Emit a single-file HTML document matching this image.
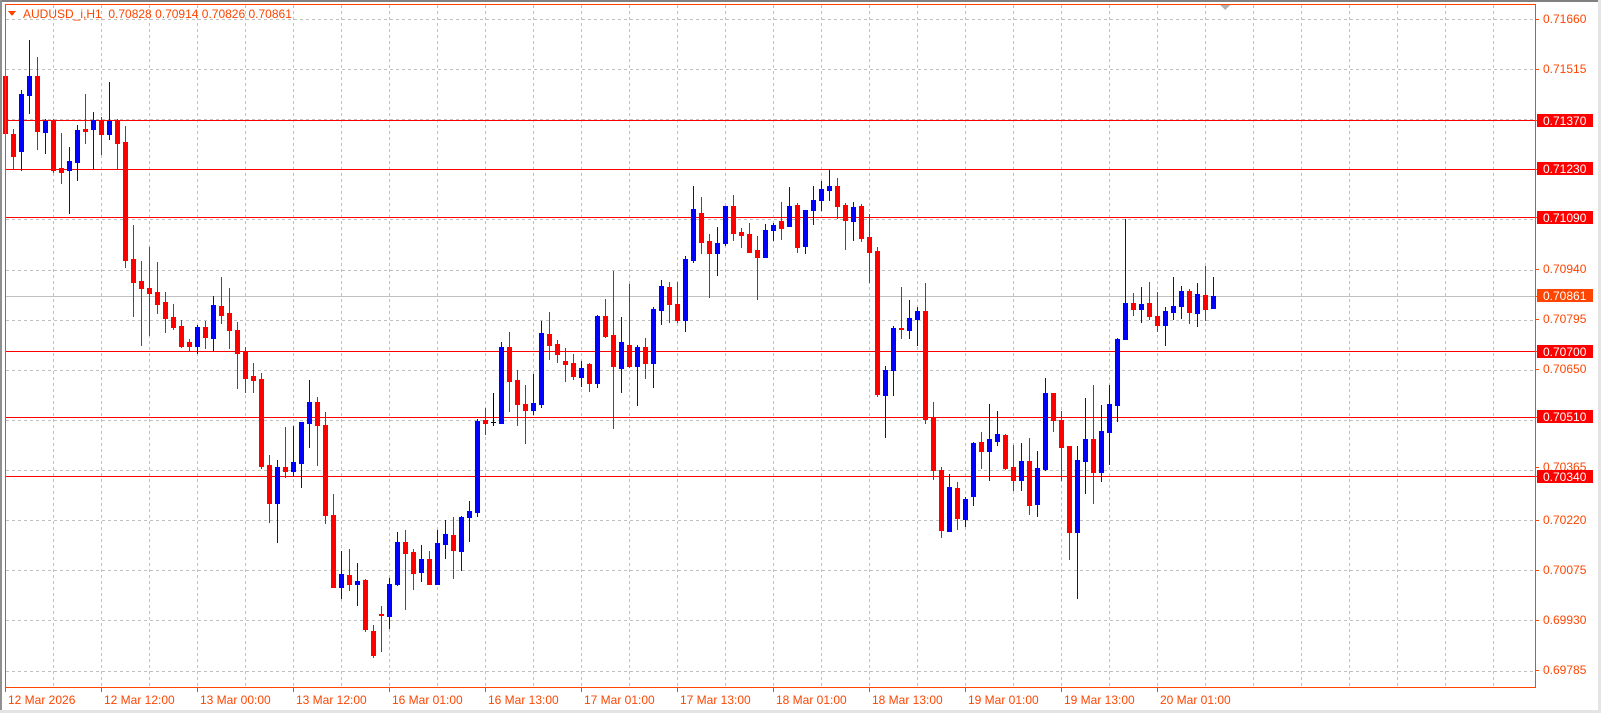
<!DOCTYPE html>
<html><head><meta charset="utf-8"><style>
html,body{margin:0;padding:0;background:#fff;width:1601px;height:713px;overflow:hidden}
svg{display:block}
text{font-family:"Liberation Sans",sans-serif;font-size:12px}
</style></head><body>
<svg id="s" width="1601" height="713" viewBox="0 0 1601 713" xmlns="http://www.w3.org/2000/svg" shape-rendering="crispEdges">
<rect x="0" y="0" width="1601" height="713" fill="#fff"/>
<rect x="0" y="0" width="1601" height="2" fill="#808080"/>
<rect x="0" y="0" width="2" height="713" fill="#909090"/>
<rect x="1598" y="0" width="3" height="713" fill="#e4e4e4"/>
<rect x="0" y="710" width="1601" height="3" fill="#e4e4e4"/>
<g id="grid" stroke="#c0c0c0" stroke-width="1" stroke-dasharray="3,3"></g>
<g id="lines"></g>
<g id="candles"></g>
<rect x="5.5" y="4.5" width="1530" height="683" fill="none" stroke="#ff4500" stroke-width="1"/>
<polygon points="1220,5 1230,5 1225,10" fill="#b0b0b0"/>
<polygon points="8,11 16,11 12,16" fill="#ff4500"/>
<text x="23" y="18" fill="#ff4500" font-size="12" xml:space="preserve" style="white-space:pre">AUDUSD_i,H1  0.70828 0.70914 0.70826 0.70861</text>
<g id="ticks" stroke="#ff4500"></g>
<g fill="#ff4500" font-size="12">
<text x="1543" y="23">0.71660</text>
<text x="1543" y="73">0.71515</text>
<text x="1543" y="273">0.70940</text>
<text x="1543" y="323">0.70795</text>
<text x="1543" y="373">0.70650</text>
<text x="1543" y="471">0.70365</text>
<text x="1543" y="524">0.70220</text>
<text x="1543" y="574">0.70075</text>
<text x="1543" y="624">0.69930</text>
<text x="1543" y="674">0.69785</text>
</g>
<g>
<rect x="1537" y="114" width="56" height="13" fill="#ff0000"/><text x="1543" y="125" fill="#fff">0.71370</text>
<rect x="1537" y="162" width="56" height="13" fill="#ff0000"/><text x="1543" y="173" fill="#fff">0.71230</text>
<rect x="1537" y="211" width="56" height="13" fill="#ff0000"/><text x="1543" y="222" fill="#fff">0.71090</text>
<rect x="1537" y="289" width="56" height="13" fill="#ff4500"/><text x="1543" y="300" fill="#fff">0.70861</text>
<rect x="1537" y="345" width="56" height="13" fill="#ff0000"/><text x="1543" y="356" fill="#fff">0.70700</text>
<rect x="1537" y="410" width="56" height="13" fill="#ff0000"/><text x="1543" y="421" fill="#fff">0.70510</text>
<rect x="1537" y="470" width="56" height="13" fill="#ff0000"/><text x="1543" y="481" fill="#fff">0.70340</text>
</g>
<g fill="#ff4500" font-size="12">
<text x="8" y="704">12 Mar 2026</text>
<text x="104" y="704">12 Mar 12:00</text>
<text x="200" y="704">13 Mar 00:00</text>
<text x="296" y="704">13 Mar 12:00</text>
<text x="392" y="704">16 Mar 01:00</text>
<text x="488" y="704">16 Mar 13:00</text>
<text x="584" y="704">17 Mar 01:00</text>
<text x="680" y="704">17 Mar 13:00</text>
<text x="776" y="704">18 Mar 01:00</text>
<text x="872" y="704">18 Mar 13:00</text>
<text x="968" y="704">19 Mar 01:00</text>
<text x="1064" y="704">19 Mar 13:00</text>
<text x="1160" y="704">20 Mar 01:00</text>
</g>
</svg>
<script>
var NS="http://www.w3.org/2000/svg";
function el(p,t,a){var e=document.createElementNS(NS,t);for(var k in a)e.setAttribute(k,a[k]);p.appendChild(e);return e;}
var g=document.getElementById("grid");
for(var k=1;k<=31;k++){var x=5.5+48*k;el(g,"line",{x1:x,y1:5,x2:x,y2:687});}
for(var k=0;k<14;k++){var y=Math.round(19+50.12*k)+0.5;el(g,"line",{x1:6,y1:y,x2:1535,y2:y});}
var L=document.getElementById("lines");
el(L,"line",{x1:6,y1:296.5,x2:1535,y2:296.5,stroke:"#c0c0c0"});
[120,169,217,351,417,476].forEach(function(y){el(L,"line",{x1:6,y1:y+0.5,x2:1535,y2:y+0.5,stroke:"#ff0000"});});
var T=document.getElementById("ticks");
[19,69,120,169,217,269,296,319,351,369,417,467,476,520,570,620,670].forEach(function(y){el(T,"line",{x1:1535,y1:y+0.5,x2:1539,y2:y+0.5});});
for(var k=0;k<=12;k++){var x=5.5+96*k;el(T,"line",{x1:x,y1:687,x2:x,y2:692});}
var D=[[66,76,133,140,'r'],[129,134,156,168,'r'],[90,94,151,170,'b'],[40,76,95,113,'b'],[57,76,131,149,'r'],[119,121,132,153,'b'],[119,121,170,172,'r'],[133,168,172,183,'r'],[147,161,170,213,'b'],[125,130,162,180,'b'],[94,129,131,143,'r'],[112,120,129,168,'b'],[117,120,134,154,'r'],[82,121,134,139,'b'],[119,120,143,168,'r'],[126,142,260,267,'r'],[225,259,282,316,'r'],[261,281,288,345,'r'],[247,288,293,335,'r'],[262,292,304,313,'r'],[292,302,318,332,'r'],[304,317,327,329,'r'],[320,326,346,347,'r'],[339,342,346,351,'r'],[325,327,346,353,'b'],[321,327,337,348,'r'],[296,305,338,350,'b'],[277,306,315,323,'r'],[288,313,330,348,'r'],[322,330,353,388,'r'],[347,352,378,392,'r'],[363,376,380,392,'r'],[373,379,466,468,'r'],[455,465,503,522,'r'],[460,467,503,542,'b'],[427,467,471,477,'r'],[426,462,471,476,'b'],[422,422,463,487,'b'],[380,402,423,447,'b'],[397,402,425,465,'r'],[412,425,515,523,'r'],[494,515,587,587,'r'],[551,574,587,598,'b'],[549,575,584,590,'r'],[563,581,584,605,'b'],[579,580,629,631,'r'],[625,631,655,657,'r'],[606,614,615,651,'r'],[578,584,616,628,'b'],[532,542,584,585,'b'],[530,542,553,609,'r'],[549,552,573,589,'r'],[545,559,572,581,'b'],[551,559,584,584,'r'],[530,543,584,584,'b'],[520,534,544,558,'b'],[517,535,550,578,'r'],[516,517,551,570,'b'],[501,511,517,541,'b'],[419,421,512,516,'b'],[408,420,423,434,'r'],[393,422,422,425,'k'],[342,347,423,423,'b'],[332,347,381,411,'r'],[370,380,404,425,'r'],[385,404,410,443,'r'],[374,403,410,414,'b'],[321,333,404,407,'b'],[312,334,345,359,'r'],[340,344,354,362,'r'],[348,361,364,381,'r'],[354,363,376,379,'r'],[361,368,377,386,'b'],[363,364,383,391,'r'],[315,316,383,387,'b'],[299,316,336,337,'r'],[271,335,366,428,'r'],[317,342,368,392,'b'],[284,345,366,367,'r'],[345,347,366,405,'b'],[338,347,363,378,'r'],[307,309,363,387,'b'],[280,286,310,324,'b'],[282,287,304,322,'r'],[282,304,320,322,'r'],[256,259,320,331,'b'],[186,209,260,262,'b'],[197,213,242,253,'r'],[234,241,253,297,'r'],[227,243,253,275,'b'],[206,206,243,245,'b'],[195,206,233,240,'r'],[228,232,235,247,'r'],[223,234,252,252,'r'],[236,250,257,299,'r'],[224,230,257,257,'b'],[223,225,230,240,'b'],[202,221,228,239,'r'],[187,206,226,226,'b'],[203,205,247,252,'r'],[210,210,246,253,'b'],[186,200,210,224,'b'],[181,189,200,210,'b'],[169,186,190,200,'b'],[178,186,206,218,'r'],[203,205,220,249,'r'],[202,207,221,240,'b'],[204,206,238,241,'r'],[214,237,252,282,'r'],[247,251,394,396,'r'],[366,370,395,437,'b'],[326,328,370,395,'b'],[287,328,329,338,'r'],[300,318,330,338,'b'],[307,311,319,345,'b'],[283,311,419,423,'r'],[402,418,470,479,'r'],[467,470,530,537,'r'],[474,487,531,531,'b'],[482,488,518,529,'r'],[497,499,519,526,'b'],[442,443,496,505,'b'],[432,442,451,468,'r'],[404,439,451,480,'b'],[411,434,441,445,'b'],[434,435,468,469,'r'],[445,467,480,490,'r'],[443,461,480,490,'b'],[438,461,505,514,'r'],[451,468,504,516,'b'],[378,393,469,470,'b'],[393,393,420,431,'r'],[411,420,447,480,'r'],[446,446,532,559,'r'],[446,460,532,598,'b'],[398,439,461,493,'b'],[385,439,472,503,'r'],[405,431,472,481,'b'],[385,404,432,464,'b'],[338,339,405,421,'b'],[219,303,339,339,'b'],[293,303,309,315,'r'],[287,304,309,322,'b'],[282,303,316,319,'r'],[292,316,325,331,'r'],[307,311,325,345,'b'],[277,306,312,319,'b'],[286,291,306,318,'b'],[289,291,312,323,'r'],[283,294,313,326,'b'],[266,295,309,320,'r'],[277,296,308,308,'b']];
var C=document.getElementById("candles");
var col={r:"#ff0000",b:"#0000ff",k:"#000000"};
D.forEach(function(d,i){
  var cx=5+8*i,c=col[d[4]];
  el(C,"rect",{x:cx,y:d[0],width:1,height:Math.max(1,d[3]-d[0]+1),fill:c});
  if(d[4]=='k'){el(C,"rect",{x:cx-2,y:d[1],width:5,height:1,fill:c});}
  else el(C,"rect",{x:cx-2,y:d[1],width:5,height:Math.max(2,d[2]-d[1]+1),fill:c});
});
</script>
</body></html>
